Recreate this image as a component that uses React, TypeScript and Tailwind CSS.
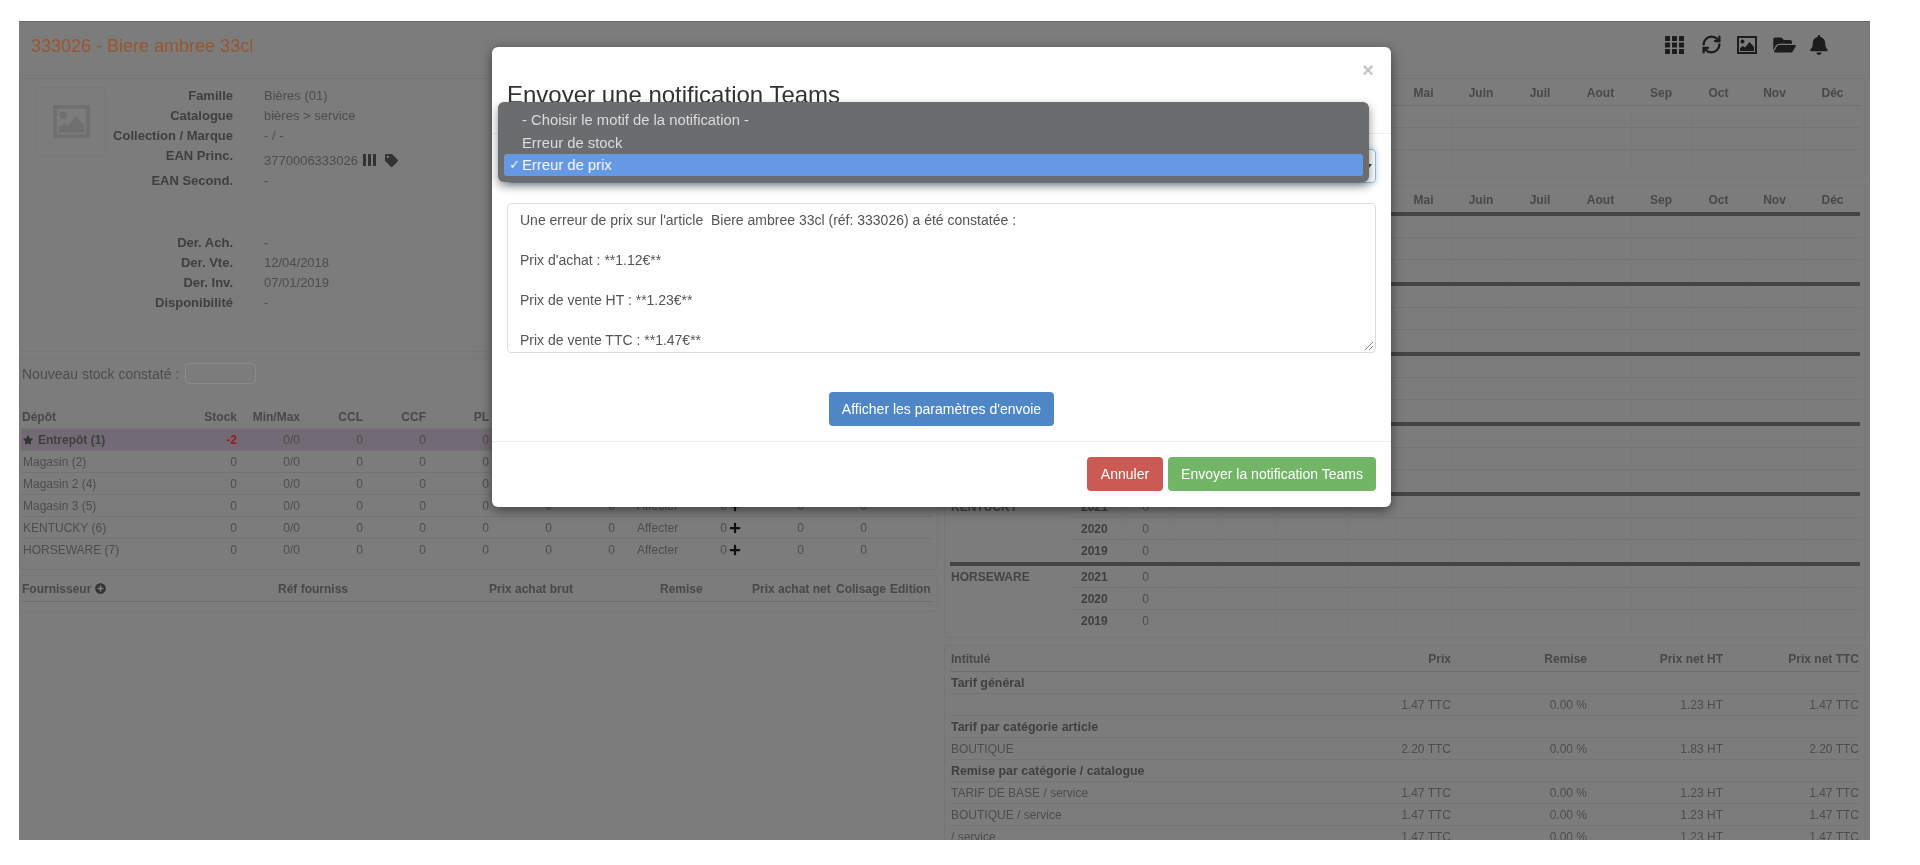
import { FaTag, FaPlus, FaStar, FaPlusCircle, FaFolderOpen, FaBell } from 'react-icons/fa';
import { RefreshCw } from 'lucide-react';

const depots = [
  { name: 'Entrepôt (1)', stock: '-2', main: true },
  { name: 'Magasin (2)', stock: '0' },
  { name: 'Magasin 2 (4)', stock: '0' },
  { name: 'Magasin 3 (5)', stock: '0' },
  { name: 'KENTUCKY (6)', stock: '0' },
  { name: 'HORSEWARE (7)', stock: '0' },
];

const months = ['Mai', 'Juin', 'Juil', 'Aout', 'Sep', 'Oct', 'Nov', 'Déc'];

const monthGrid = 'grid grid-cols-[120px_51px_49px_52px_53px_72px_48px_57px_58px_60px_61px_60px_55px_57px_59px]';

const tarifs = [
  { label: 'Tarif général', head: true },
  { label: '', prix: '1.47 TTC', ht: '1.23 HT', ttc: '1.47 TTC' },
  { label: 'Tarif par catégorie article', head: true },
  { label: 'BOUTIQUE', prix: '2.20 TTC', ht: '1.83 HT', ttc: '2.20 TTC' },
  { label: 'Remise par catégorie / catalogue', head: true },
  { label: 'TARIF DE BASE / service', prix: '1.47 TTC', ht: '1.23 HT', ttc: '1.47 TTC' },
  { label: 'BOUTIQUE / service', prix: '1.47 TTC', ht: '1.23 HT', ttc: '1.47 TTC' },
  { label: '/ service', prix: '1.47 TTC', ht: '1.23 HT', ttc: '1.47 TTC' },
];

function ImageIcon({ className }: { className?: string }) {
  return (
    <svg viewBox="0 0 20 18" className={className} fill="currentColor">
      <path fillRule="evenodd" d="M0 0h20v18H0zM2 2v14h16V2z" />
      <circle cx="5.5" cy="5.5" r="2" />
      <path d="M3 15v-3l3-2 2 1.5L12.500 6 17 11v4z" />
    </svg>
  );
}

function InfoRow({ label, children, className }: { label: string; children: React.ReactNode; className?: string }) {
  return (
    <div className={`flex leading-[20px] ${className || 'h-5'}`}>
      <div className="w-[127px] shrink-0 flex justify-end font-bold text-[#3f3f3f] whitespace-nowrap">{label}</div>
      <div className="ml-[31px] flex items-start text-[#4d4d4d]">{children}</div>
    </div>
  );
}

function EmptyCells() {
  return (
    <>
      {[0, 1, 2, 3, 4, 5, 6, 7, 8, 9, 10, 11].map((i) => (
        <div key={i} className="border-l border-[#797979]" />
      ))}
    </>
  );
}

function MonthHeader({ className }: { className: string }) {
  return (
    <div className={`${monthGrid} items-center font-bold text-[#484848] ${className}`}>
      <div className="col-span-7" />
      {months.map((m) => (
        <div key={m} className="text-center">{m}</div>
      ))}
    </div>
  );
}

function YearBlock({ name }: { name: string }) {
  return (
    <div className="h-[70px] border-t-4 border-[#444]">
      {['2021', '2020', '2019'].map((y, i) => (
        <div key={y} className="flex h-[22px]">
          <div className="w-[120px] shrink-0 leading-[22px] pl-px font-bold text-[#444] whitespace-nowrap">{i === 0 ? name : ''}</div>
          <div className={`flex-1 grid grid-cols-[51px_49px_52px_53px_72px_48px_57px_58px_60px_61px_60px_55px_57px_59px] ${i < 2 ? 'border-b border-[#747474]' : ''}`}>
            <div className="pl-[11px] leading-[22px] font-bold text-[#3f3f3f]">{y}</div>
            <div className="pr-[21px] text-right leading-[22px] text-[#4d4d4d] border-l border-[#797979]">0</div>
            <EmptyCells />
          </div>
        </div>
      ))}
    </div>
  );
}

export default function App() {
  return (
    <div className="relative w-[1920px] h-[865px] bg-white pt-[21px] pl-[19px] overflow-hidden font-['Liberation_Sans',Arial,sans-serif] text-[12px] leading-[16px]">
      <div className="relative w-[1851px] h-[819px] overflow-hidden bg-[#7c7c7c] border-t border-[#666] blur-[0.7px]">
        {/* page header */}
        <div className="flex h-[54px] items-center justify-between border-b border-[#767676] pb-[6px] pl-[12px] pr-[42px]">
          <div className="text-[18px] leading-[20px] text-[#99562e]">333026 - Biere ambree 33cl</div>
          <div className="flex items-center mb-[2px] text-[#1c1c1c]">
            <svg viewBox="0 0 19 18" className="w-[19px] h-[18px]" fill="currentColor">
              {[0, 6.500, 13].flatMap((y) => [0, 7, 14].map((x) => <rect key={`${x}-${y}`} x={x} y={y} width="5" height="5" rx="0.5" />))}
            </svg>
            <RefreshCw className="ml-[17px] w-[21px] h-[21px]" strokeWidth={2.6} />
            <ImageIcon className="ml-[15px] w-[20px] h-[18px]" />
            <FaFolderOpen className="ml-[15px] w-[25px] h-[20px]" />
            <FaBell className="ml-[13px] w-[18px] h-[20px]" />
          </div>
        </div>

        <div className="flex pt-[2px]">
          {/* left column */}
          <div className="w-[919px] shrink-0 text-[12px]">
            <div className="h-[274px] rounded-[4px] border border-[#767676] pt-[7px] pl-[16px] flex text-[13px]">
              <div className="mt-[1px] w-[70px] h-[69px] rounded-[4px] border border-[#777] flex items-center justify-center">
                <ImageIcon className="w-[41px] h-[33px] text-[#6f6f6f]" />
              </div>
              <div>
                <InfoRow label="Famille">Bières (01)</InfoRow>
                <InfoRow label="Catalogue">bières &gt; service</InfoRow>
                <InfoRow label="Collection / Marque">- / -</InfoRow>
                <InfoRow label="EAN Princ." className="h-[25px]">
                  <span className="mt-[5px] flex items-center">
                    3770006333026
                    <svg viewBox="0 0 13 12" className="ml-[5px] w-[13px] h-[12px] mb-[3px]" fill="#333">
                      <rect x="0" width="3" height="12" />
                      <rect x="5" width="3" height="12" />
                      <rect x="10" width="3" height="12" />
                    </svg>
                    <FaTag className="ml-[9px] mb-[2px] text-[#333] text-[13px]" />
                  </span>
                </InfoRow>
                <InfoRow label="EAN Second." className="h-[62px]">-</InfoRow>
                <InfoRow label="Der. Ach.">-</InfoRow>
                <InfoRow label="Der. Vte.">12/04/2018</InfoRow>
                <InfoRow label="Der. Inv.">07/01/2019</InfoRow>
                <InfoRow label="Disponibilité">-</InfoRow>
              </div>
            </div>

            <div className="mt-[6px] h-[212px] rounded-[4px] border border-[#767676] pt-[4px] pl-[1px] pr-[5px]">
              <div className="flex items-center h-[21px] pl-px text-[14px] text-[#4d4d4d]">
                Nouveau stock constaté :
                <div className="ml-[6px] w-[71px] h-[21px] rounded-[4px] border border-[#8a8a8a]" />
              </div>
              <div className="mt-[22px] flex h-[23px] items-center font-bold text-[#484848] border-b border-[#737373]">
                <div className="w-[149px] pl-px">Dépôt</div>
                <div className="w-[67px] text-right">Stock</div>
                <div className="w-[63px] text-right">Min/Max</div>
                <div className="w-[63px] text-right">CCL</div>
                <div className="w-[63px] text-right">CCF</div>
                <div className="w-[63px] text-right">PL</div>
              </div>
              {depots.map((d, i) => (
                <div key={d.name} className={`flex h-[22px] items-center text-[#4d4d4d] ${i < 5 ? 'border-b border-[#737373]' : ''} ${d.main ? 'bg-[#726a74]' : ''}`}>
                  <div className={`w-[216px] pl-[2px] relative flex items-center gap-[5px] ${d.main ? 'font-bold text-[#3f3f3f]' : ''}`}>
                    {d.main && <FaStar className="text-[10px] text-[#333]" />}
                    {d.name}
                    <span className={`absolute right-0 ${d.stock === '-2' ? 'text-[#9a1a1a] font-bold' : ''}`}>{d.stock}</span>
                  </div>
                  <div className="w-[63px] text-right">0/0</div>
                  <div className="w-[63px] text-right">0</div>
                  <div className="w-[63px] text-right">0</div>
                  <div className="w-[63px] text-right">0</div>
                  <div className="w-[63px] text-right">0</div>
                  <div className="w-[63px] text-right">0</div>
                  <div className="w-[22px]" />
                  <div className="w-[76px]">Affecter</div>
                  <div className="w-[14px] text-right">0</div>
                  <div className="w-[14px] flex justify-end"><FaPlus className="text-[12px] text-[#111]" /></div>
                  <div className="w-[63px] text-right">0</div>
                  <div className="w-[63px] text-right">0</div>
                </div>
              ))}
            </div>

            <div className="mt-[5px] h-[37px] rounded-[4px] border border-[#767676] pl-[1px] pr-[5px]">
              <div className="flex h-[26px] items-center border-b border-[#6e6e6e] font-bold text-[#484848]">
                <div className="w-[257px] pl-px flex items-center gap-[4px]">Fournisseur <FaPlusCircle className="text-[11px] text-[#333]" /></div>
                <div className="w-[211px]">Réf fourniss</div>
                <div className="w-[171px]">Prix achat brut</div>
                <div className="w-[92px]">Remise</div>
                <div className="w-[84px]">Prix achat net</div>
                <div className="w-[54px]">Colisage</div>
                <div>Edition</div>
              </div>
            </div>
          </div>

          {/* right column */}
          <div className="ml-[6px] w-[922px] shrink-0">
            <div className="h-[100px] rounded-[4px] border border-[#767676] pt-px px-[5px]">
              <MonthHeader className="h-[26px] border-b border-[#6f6f6f]" />
              {[0, 1, 2].map((r) => (
                <div key={r} className={`${monthGrid} h-[22px] ${r < 2 ? 'border-b border-[#747474]' : ''}`}>
                  <div className="col-span-3" />
                  <EmptyCells />
                </div>
              ))}
            </div>

            <div className="mt-[7px] h-[453px] rounded-[4px] border border-[#767676] pt-[2px] px-[5px]">
              <MonthHeader className="h-[24px]" />
              <YearBlock name="" />
              <YearBlock name="" />
              <YearBlock name="" />
              <YearBlock name="" />
              <YearBlock name="KENTUCKY" />
              <YearBlock name="HORSEWARE" />
            </div>

            <div className="mt-[7px] rounded-[4px] border border-[#767676] pt-px px-[5px]">
              <div className="flex h-[25px] items-center border-b border-[#6e6e6e] font-bold text-[#484848]">
                <div className="w-[400px] pl-px">Intitulé</div>
                <div className="w-[101px] text-right">Prix</div>
                <div className="w-[136px] text-right">Remise</div>
                <div className="w-[136px] text-right">Prix net HT</div>
                <div className="w-[136px] text-right">Prix net TTC</div>
              </div>
              {tarifs.map((t, i) => (
                <div key={i} className="flex h-[22px] items-center border-b border-[#747474] text-[#4d4d4d]">
                  <div className={`w-[400px] pl-px whitespace-nowrap ${t.head ? 'text-[12.4px] font-bold text-[#3f3f3f]' : ''}`}>{t.label}</div>
                  {!t.head && (
                    <>
                      <div className="w-[101px] text-right">{t.prix}</div>
                      <div className="w-[136px] text-right">0.00 %</div>
                      <div className="w-[136px] text-right">{t.ht}</div>
                      <div className="w-[136px] text-right">{t.ttc}</div>
                    </>
                  )}
                </div>
              ))}
            </div>
          </div>
        </div>
      </div>

      {/* modal */}
      <div className="absolute left-[492px] top-[47px] w-[899px] h-[460px] rounded-[6px] bg-white shadow-[0_3px_12px_rgba(0,0,0,0.5)] blur-[0.6px] text-[14px]">
        <div className="relative h-[87px] border-b border-[#eee] px-[15px] pt-[34px]">
          <div className="text-[24px] leading-[28px] text-[#333]">Envoyer une notification Teams</div>
          <div className="absolute right-[17px] top-[13px] text-[20px] leading-[20px] font-bold text-[#c4c4c4]">×</div>
        </div>
        <div className="px-[15px] pt-[15px]">
          <div className="h-[34px] rounded-[4px] border border-[#8fbce6] flex items-center justify-end pr-[3px] shadow-[0_0_6px_rgba(102,175,233,0.5)]">
            <span className="w-0 h-0 border-x-[3px] border-x-transparent border-t-[4px] border-t-[#444]" />
          </div>
          <div className="relative mt-[20px] h-[150px] overflow-hidden rounded-[4px] border border-[#ddd] px-[12px] py-[6px] text-[#555] leading-[20px]">
            <div>Une erreur de prix sur l'article&nbsp; Biere ambree 33cl (réf: 333026) a été constatée :</div>
            <div className="mt-[20px]">Prix d'achat : **1.12€**</div>
            <div className="mt-[20px]">Prix de vente HT : **1.23€**</div>
            <div className="mt-[20px]">Prix de vente TTC : **1.47€**</div>
            <svg viewBox="0 0 10 10" className="absolute right-px bottom-px w-[10px] h-[10px]" stroke="#888" fill="none"><path d="M1 9 L9 1 M5 9 L9 5" /></svg>
          </div>
          <div className="mt-[39px] flex justify-center">
            <div className="w-[225px] h-[34px] rounded-[4px] bg-[#4f86c6] text-white flex items-center justify-center">Afficher les paramètres d'envoie</div>
          </div>
        </div>
        <div className="mt-[15px] border-t border-[#eee] pt-[15px] px-[15px] flex justify-end gap-[5px]">
          <div className="w-[76px] h-[34px] rounded-[4px] bg-[#cb5a55] text-white flex items-center justify-center">Annuler</div>
          <div className="w-[208px] h-[34px] rounded-[4px] bg-[#72b566] text-white flex items-center justify-center">Envoyer la notification Teams</div>
        </div>

        {/* native select dropdown */}
        <div className="absolute left-[6px] top-[55px] w-[871px] h-[80px] rounded-[6px] bg-[#6b6c6e] pt-[6px] px-[6px] text-[#dcdcdc] text-[14.8px] shadow-[0_4px_10px_rgba(0,0,0,0.45)]">
          <div className="h-[23px] flex items-center pl-[18px]">- Choisir le motif de la notification -</div>
          <div className="h-[23px] flex items-center pl-[18px]">Erreur de stock</div>
          <div className="relative h-[22px] flex items-center pl-[18px] rounded-[3px] bg-[#6699e3] text-[#f2f2f2]">
            <span className="absolute left-[5px] font-['DejaVu_Sans',sans-serif] text-[13px]">✓</span>
            Erreur de prix
          </div>
        </div>
      </div>
    </div>
  );
}
